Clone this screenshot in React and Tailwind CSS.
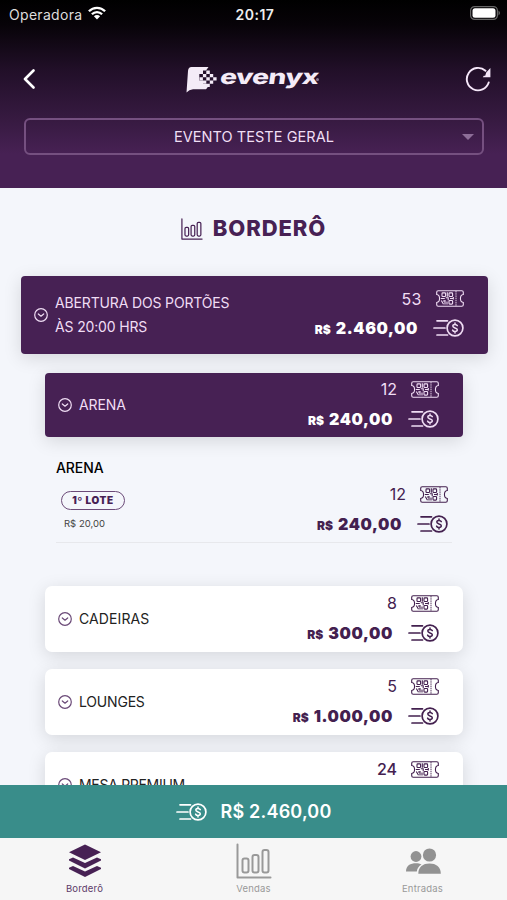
import clsx from 'clsx'

const SECTORS = [
    { name: 'CADEIRAS', count: 8, total: '300,00', nameClass: 'tracking-[0.1px]' },
    { name: 'LOUNGES', count: 5, total: '1.000,00', nameClass: 'tracking-[-0.2px]' },
    { name: 'MESA PREMIUM', count: 24, nameClass: 'tracking-[-0.3px]', countClass: 'font-medium' },
]

function TicketIcon({ className }) {
    return (
        <svg viewBox="0 0 28 17" className={clsx('h-[17px] w-7', className)} fill="none" stroke="currentColor">
            <path d="M2.2.8h23.6q1.5 0 1.5 1.5v2.2c-3.8.5-3.8 7.5 0 8v2.2q0 1.5-1.5 1.5H2.2Q.7 16.2.7 14.7v-2.2c3.8-.5 3.8-7.5 0-8V2.3Q.7.8 2.2.8Z" strokeWidth="1.1" />
            <path d="M20 1v15" strokeWidth=".9" strokeDasharray="1.5 .7" />
            <g strokeWidth="1.1">
                <rect x="6" y="2.9" width="3.6" height="3.6" rx=".8" />
                <rect x="13" y="2.9" width="3.6" height="3.6" rx=".8" />
                <rect x="13" y="10.5" width="3.6" height="3.6" rx=".8" />
                <path d="M11.3 2.300v4.400M4.800 8.500h4M9.800 7.800h2.400v2.400M14 8.500h3.300M5.300 10.500l2.200 3.700M9 10v4.400M11 11.500v2.900M7 11h2.500M17.300 7v2.500" />
            </g>
        </svg>
    )
}

function MoneyIcon({ className }) {
    return (
        <svg viewBox="0 0 31 18" className={clsx('h-[18px] w-[31px]', className)} fill="none" stroke="currentColor" strokeLinecap="round">
            <circle cx="22" cy="9" r="7.900" strokeWidth="1.700" />
            <path d="M4 1.800h10.500M1 9h11M4 16h10.500" strokeWidth="1.700" />
            <path d="M24.300 6.700c-.5-1-1.300-1.300-2.300-1.300-1.300 0-2.200.7-2.200 1.700 0 2.400 4.500 1.200 4.500 3.700 0 1-1 1.700-2.300 1.700-1.100 0-2-.4-2.400-1.400M22 4v1.400M22 12.500V14" strokeWidth="1.500" />
        </svg>
    )
}

function ChartIcon({ className, strokeWidth = 2 }) {
    return (
        <svg viewBox="0 0 36 36" className={className} fill="none" stroke="currentColor" strokeWidth={strokeWidth} strokeLinecap="round" strokeLinejoin="round">
            <path d="M1.500 1.500v33h33" />
            <rect x="6.500" y="15.500" width="6" height="14" rx="2" />
            <rect x="16.500" y="12" width="6" height="17.500" rx="2" />
            <rect x="26.500" y="7" width="6" height="22.500" rx="2" />
        </svg>
    )
}

function ToggleIcon({ className }) {
    return (
        <svg viewBox="0 0 14 14" className={clsx('size-3.5 shrink-0', className)} fill="none" stroke="currentColor" strokeWidth="1.200" strokeLinecap="round" strokeLinejoin="round">
            <circle cx="7" cy="7" r="6.300" />
            <path d="m4.300 6 2.700 2.200L9.700 6" />
        </svg>
    )
}

function Amounts({ count, total, countClass, totalClass }) {
    return (
        <div className="flex flex-col items-end">
            <div className="flex h-[29px] items-center gap-3.5 pb-px">
                <span className={clsx('text-[16px]', countClass)}>{count}</span>
                <TicketIcon />
            </div>
            <div className="flex h-[29px] items-center gap-[15px]">
                {total && (
                    <span className={clsx('flex items-baseline gap-[5px] font-black', totalClass)}>
                        <span className="text-[12px]">R$</span>
                        <span className="text-[16px] tracking-[0.6px]">{total}</span>
                    </span>
                )}
                <MoneyIcon />
            </div>
        </div>
    )
}

function SectorCard({ name, count, total, active, nameClass, countClass }) {
    return (
        <div
            className={clsx(
                'flex shrink-0 items-center justify-between pr-6 pl-[13px] shadow-[0_4px_18px_rgba(0,0,0,0.13)]',
                active
                    ? 'h-16 rounded-[4px] bg-[#472154] text-[#f0ddf4]'
                    : 'h-[66px] rounded-[7px] bg-white text-[#43204f]'
            )}
        >
            <div className="flex items-center gap-[7px]">
                <ToggleIcon className={active ? '' : 'text-[#6b4a78]'} />
                <span className={clsx('pb-[2px] text-[14px]', nameClass, !active && 'text-[#222]')}>{name}</span>
            </div>
            <div className="pb-[2px]">
                <Amounts count={count} total={total} countClass={countClass} totalClass={active && 'text-white'} />
            </div>
        </div>
    )
}

function StatusBar() {
    return (
        <div className="flex h-7 items-center justify-between pr-[6px] pl-[9px]">
            <div className="flex w-[200px] items-center gap-[6px]">
                <span className="text-[14px] tracking-[0.3px] text-[#ddd]">Operadora</span>
                <svg viewBox="0 0 18 14" className="-mt-[2px] h-3.5 w-[18px]" fill="none" stroke="#fff" strokeWidth="2.300">
                    <path d="M.9 5.300C5.400.700 12.600.700 17.100 5.300M3.900 8.300C6.700 5.400 11.300 5.400 14.100 8.300" />
                    <path d="M9 13.500 5.900 10.300C7.500 8.700 10.500 8.700 12.100 10.300Z" fill="#fff" stroke="none" />
                </svg>
            </div>
            <span className="text-[14px] font-semibold tracking-[0.5px] text-[#eee]">20:17</span>
            <div className="flex w-[200px] justify-end">
                <svg viewBox="0 0 31 14" className="-mt-[2px] h-3.5 w-[31px]">
                    <rect x=".6" y=".6" width="26.800" height="12.800" rx="4" fill="none" stroke="#666" strokeWidth="1.200" />
                    <rect x="2.500" y="2.200" width="23" height="9.600" rx="2.500" fill="#fff" />
                    <path d="M28.500 4.500q3 2.500 0 5Z" fill="#666" />
                </svg>
            </div>
        </div>
    )
}

function Logo() {
    return (
        <div className="flex items-center pl-[4px] text-[#f4ebf7]">
            <svg viewBox="0 0 31 27" className="h-[27px] w-[31px]" fill="currentColor">
                <path d="M5.500 1H22.500L20 4.500h-3V8h-3.700v6.500H17V18h4.500v3.500l-1.500 1.700H7Q3 23.500.5 26.500L2 5Q2.300 1 5.500 1Z" />
                <path d="M20.300 4.600h3.500v3.300h-3.500ZM16.900 7.900h3.400v3.300h-3.400ZM23.800 7.900h3.400v3.300h-3.400ZM20.300 11.200h3.500v3.300h-3.500ZM27.200 11.200h3.400v3.300h-3.400ZM13.500 11.200h3.400v3.300h-3.400ZM16.900 14.500h3.400v3.300h-3.400ZM23.800 14.500h3.400v3.300h-3.400ZM20.300 17.800h3.500v3.300h-3.500Z" />
            </svg>
            <span className="ml-[3px] inline-block w-[96px] origin-left scale-x-[1.380] -skew-x-6 pb-[4px] text-[20.500px] leading-[24px] font-extrabold tracking-[-0.5px]">
                evenyx
            </span>
            <span className="size-[3px] rounded-full bg-[#8d7a93]" />
        </div>
    )
}

function Header() {
    return (
        <header className="flex h-[188px] shrink-0 flex-col bg-[linear-gradient(to_bottom,#000_0%,#070308_13%,#210f28_37%,#371a41_64%,#472154_82%)]">
            <StatusBar />
            <div className="flex h-[90px] items-center justify-between pt-3 pr-[16px] pl-[23px]">
                <svg viewBox="0 0 12 20" className="h-5 w-3" fill="none" stroke="#fff" strokeWidth="2.600" strokeLinecap="round" strokeLinejoin="round">
                    <path d="M10.500 1.500 2 10l8.500 8.500" />
                </svg>
                <Logo />
                <svg viewBox="0 0 26 26" className="size-[26px]" fill="none" stroke="#f6e8fa" strokeWidth="1.900" strokeLinecap="round">
                    <path d="M23.700 16.500A11.200 11.200 0 1 1 20.500 4.800" />
                    <path d="M25.400 2v9.300h-7.600l1-1.600h1.400l1-3.200 3-3.200Z" fill="#f6e8fa" stroke="none" />
                </svg>
            </div>
            <div className="mx-6 mr-[23px] flex h-[37px] items-center rounded-[6px] border-2 border-[#755080] pr-[8px] pl-5">
                <span className="flex-1 text-center text-[14.500px] tracking-[0.050px] text-[#f0dff4]">EVENTO TESTE GERAL</span>
                <svg viewBox="0 0 12 6" className="h-1.5 w-3" fill="#8d6e98">
                    <path d="M0 0h12L6 6Z" />
                </svg>
            </div>
        </header>
    )
}

function BottomNav() {
    return (
        <nav className="grid h-[62px] shrink-0 grid-cols-3 bg-[#f6f6f6] pt-[5px] text-center text-[9.500px] leading-[12px] tracking-[0.2px] text-[#999]">
            <div className="flex flex-col items-center gap-[4px] text-[#5d3a69]">
                <svg viewBox="0 0 34 36" className="h-9 w-[34px]" fill="#472154">
                    <path d="M17 1.500 33 9.200 17 17 1 9.200Z" />
                    <path d="m1 16.200 4-1.700L17 20l12-5.500 4 1.700v1.300L17 25.500 1 17.500Z" />
                    <path d="m1 24.700 4-1.700L17 28.500 29 23l4 1.700V26L17 34 1 26Z" />
                </svg>
                Borderô
            </div>
            <div className="flex flex-col items-center gap-[4px]">
                <ChartIcon className="size-9" strokeWidth={2} />
                Vendas
            </div>
            <div className="flex flex-col items-center gap-[4px]">
                <svg viewBox="0 0 36 36" className="size-9" fill="#929292">
                    <circle cx="11" cy="13.500" r="5.400" />
                    <circle cx="24.500" cy="12" r="6.600" />
                    <path d="M1 28.500c0-6 4.500-8.200 10-8.200 2 0 4 .4 5.500 1.200-2.700 1.700-4.300 3.700-4.700 7Z" />
                    <path d="M13.300 30.800c0-7 4.700-10.200 11.200-10.200s11.300 3.200 11.300 10.200Z" />
                </svg>
                Entradas
            </div>
        </nav>
    )
}

export default function App() {
    return (
        <div className="flex h-[900px] w-[507px] flex-col overflow-hidden bg-[#f4f6fb] font-['Inter',sans-serif]">
            <Header />

            <main className="min-h-0 flex-1 overflow-hidden">
                <div className="flex h-[88px] items-center justify-center gap-[10px] pb-[8px] text-[#472154]">
                    <ChartIcon className="mt-[2px] size-[22px]" />
                    <h1 className="text-[22px] font-extrabold tracking-[0.9px]">BORDERÔ</h1>
                </div>

                <div className="mr-[19px] ml-[21px] flex h-[78px] items-center justify-between rounded-[4px] bg-[#472154] pr-6 pl-[13px] text-[#f0ddf4] shadow-[0_4px_18px_rgba(0,0,0,0.13)]">
                    <div className="flex items-center gap-[7px]">
                        <ToggleIcon />
                        <p className="text-[14px] leading-[24.500px] tracking-[-0.150px]">
                            ABERTURA DOS PORTÕES
                            <br />
                            ÀS 20:00 HRS
                        </p>
                    </div>
                    <div className="pb-[3px]">
                        <Amounts count={53} total="2.460,00" countClass="tracking-[0.5px]" totalClass="text-white" />
                    </div>
                </div>

                <div className="mt-[19px] mr-11 ml-[45px]">
                    <SectorCard name="ARENA" count={12} total="240,00" active nameClass="tracking-[-0.1px]" />

                    {/* Lots of the open sector */}
                    <div className="mx-[11px] h-[106px] border-b border-[#e7e8ec] pt-5">
                        <h2 className="text-[14px] leading-[21px] font-medium tracking-[-0.1px] text-black">ARENA</h2>
                        <div className="flex justify-between pr-[4px] pl-[5px]">
                            <div className="pt-[13px]">
                                <div className="flex h-[19px] w-16 items-center justify-center rounded-full border-[1.500px] border-[#6b4a78] text-[10px] font-black tracking-[0.6px] text-[#472154]">
                                    1º LOTE
                                </div>
                                <p className="mt-[7px] pl-[3px] text-[9.500px] leading-[14px] text-[#444]">R$ 20,00</p>
                            </div>
                            <div className="pt-[2px] text-[#43204f]">
                                <Amounts count={12} total="240,00" />
                            </div>
                        </div>
                    </div>

                    <div className="mt-[43px] flex flex-col gap-[17px]">
                        {SECTORS.map(s => (
                            <SectorCard key={s.name} {...s} />
                        ))}
                    </div>
                </div>
            </main>

            <div className="flex h-[53px] shrink-0 items-center justify-center gap-3.5 bg-[#398d8a] text-white">
                <MoneyIcon />
                <span className="text-[18px] font-semibold tracking-[0.2px]">R$ 2.460,00</span>
            </div>
            <BottomNav />
        </div>
    )
}
